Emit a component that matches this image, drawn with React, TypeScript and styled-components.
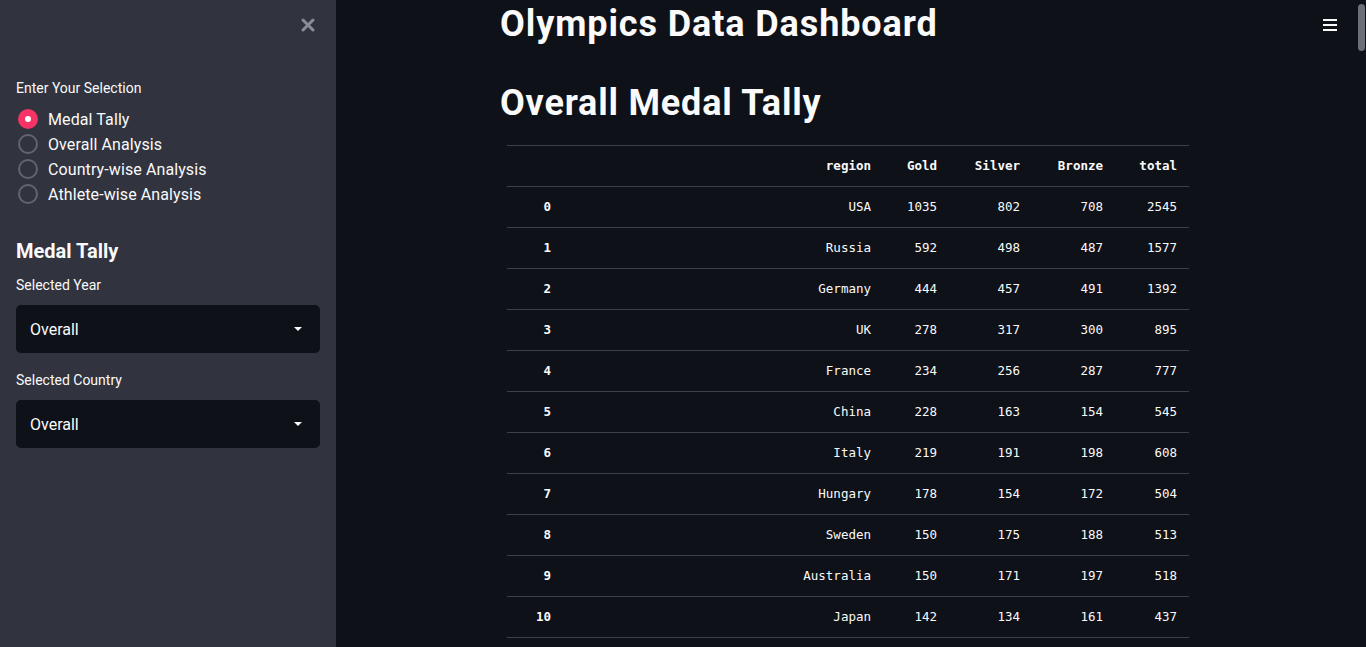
import React from "react";
import styled, { createGlobalStyle } from "styled-components";

const Global = createGlobalStyle`
  html, body { margin: 0; padding: 0; background: #0e1117; }
  body { font-family: Roboto, "Noto Sans", sans-serif; color: #fafafa; overflow: hidden; }
  * { box-sizing: border-box; }
`;

const Page = styled.div`
  display: flex;
  width: 1366px;
  height: 647px;
  background: #0e1117;
  position: relative;
  overflow: hidden;
`;

const Sidebar = styled.aside`
  width: 336px;
  flex: none;
  background: #31333f;
  padding: 0 16px;
  display: flex;
  flex-direction: column;
  position: relative;
`;

const CloseButton = styled.div`
  position: absolute;
  top: 17px;
  left: 300px;
  width: 16px;
  height: 16px;
`;

const Label = styled.div<{ $top: number }>`
  font-size: 14px;
  line-height: 20px;
  margin-top: ${(p) => p.$top}px;
  color: #fafafa;
`;

const RadioGroup = styled.div`
  display: flex;
  flex-direction: column;
  margin-top: 8.5px;
`;

const RadioItem = styled.div`
  display: flex;
  align-items: center;
  height: 25px;
  gap: 10px;
  font-size: 16px;
  letter-spacing: 0.1px;
  color: #fafafa;
`;

const RadioCircle = styled.span<{ $on?: boolean }>`
  width: 20px;
  height: 20px;
  margin-left: 2px;
  border-radius: 50%;
  flex: none;
  display: flex;
  align-items: center;
  justify-content: center;
  background: ${(p) => (p.$on ? "#f63366" : "transparent")};
  border: ${(p) => (p.$on ? "none" : "2px solid #62646f")};
  &::after {
    content: "";
    display: ${(p) => (p.$on ? "block" : "none")};
    width: 6px;
    height: 6px;
    border-radius: 50%;
    background: #fff;
  }
`;

const SideHeading = styled.h2`
  margin: 29.5px 0 0;
  font-size: 20px;
  line-height: 30px;
  font-weight: 700;
`;

const Select = styled.div`
  margin-top: 10px;
  height: 48px;
  background: #0e1117;
  border-radius: 5px;
  display: flex;
  align-items: center;
  justify-content: space-between;
  padding: 0 17px 0 14px;
  font-size: 16px;
`;

const Main = styled.main`
  flex: 1;
  padding-left: 164px;
  display: flex;
  flex-direction: column;
`;

const Title = styled.h1`
  margin: 0;
  font-size: 36px;
  line-height: 48px;
  font-weight: 700;
  letter-spacing: 0.9px;
`;

const Heading = styled.h2`
  margin: 31px 0 0;
  font-size: 36px;
  line-height: 48px;
  font-weight: 700;
  letter-spacing: 0.8px;
`;

const Table = styled.table`
  margin: 18px 0 0 7px;
  width: 682px;
  border-collapse: collapse;
  font-family: "DejaVu Sans Mono", "Liberation Mono", monospace;
  font-size: 12.5px;
  color: #fafafa;
  border-top: 1px solid #3d3f47;
`;

const Th = styled.th<{ $w?: number }>`
  height: 41px;
  padding: 0 12px 2px 0;
  text-align: right;
  font-weight: 700;
  border-bottom: 1px solid #3d3f47;
  width: ${(p) => (p.$w ? `${p.$w}px` : "auto")};
`;

const Td = styled.td<{ $bold?: boolean }>`
  height: 41px;
  padding: 0 12px 2px 0;
  text-align: right;
  font-weight: ${(p) => (p.$bold ? 700 : 400)};
  border-bottom: 1px solid #3d3f47;
`;

const Hamburger = styled.div`
  position: absolute;
  top: 19px;
  left: 1323px;
  width: 14px;
  display: flex;
  flex-direction: column;
  gap: 3px;
  & > span {
    display: block;
    height: 2px;
    background: #fafafa;
  }
`;

const Scrollbar = styled.div`
  position: absolute;
  top: 4px;
  right: 1px;
  width: 7px;
  height: 47px;
  border-radius: 4px;
  background: #6d6f76;
`;

const Caret = () => (
  <svg width="10" height="6" viewBox="0 0 10 6">
    <path d="M1 1 L9 1 L5 5 Z" fill="#fafafa" />
  </svg>
);

const rows: [string, number, number, number, number][] = [
  ["USA", 1035, 802, 708, 2545],
  ["Russia", 592, 498, 487, 1577],
  ["Germany", 444, 457, 491, 1392],
  ["UK", 278, 317, 300, 895],
  ["France", 234, 256, 287, 777],
  ["China", 228, 163, 154, 545],
  ["Italy", 219, 191, 198, 608],
  ["Hungary", 178, 154, 172, 504],
  ["Sweden", 150, 175, 188, 513],
  ["Australia", 150, 171, 197, 518],
  ["Japan", 142, 134, 161, 437],
];

export default function App() {
  return (
    <>
      <Global />
      <Page>
        <Sidebar>
          <CloseButton>
            <svg width="16" height="16" viewBox="0 0 16 16">
              <path d="M3 3 L13 13 M13 3 L3 13" stroke="#8b8d94" strokeWidth="3" strokeLinecap="round" />
            </svg>
          </CloseButton>
          <Label $top={78}>Enter Your Selection</Label>
          <RadioGroup>
            <RadioItem><RadioCircle $on />Medal Tally</RadioItem>
            <RadioItem><RadioCircle />Overall Analysis</RadioItem>
            <RadioItem><RadioCircle />Country-wise Analysis</RadioItem>
            <RadioItem><RadioCircle />Athlete-wise Analysis</RadioItem>
          </RadioGroup>
          <SideHeading>Medal Tally</SideHeading>
          <Label $top={9}>Selected Year</Label>
          <Select>Overall<Caret /></Select>
          <Label $top={17}>Selected Country</Label>
          <Select>Overall<Caret /></Select>
        </Sidebar>
        <Main>
          <Title>Olympics Data Dashboard</Title>
          <Heading>Overall Medal Tally</Heading>
          <Table>
            <thead>
              <tr>
                <Th $w={56}></Th>
                <Th>region</Th>
                <Th $w={66}>Gold</Th>
                <Th $w={83}>Silver</Th>
                <Th $w={83}>Bronze</Th>
                <Th $w={74}>total</Th>
              </tr>
            </thead>
            <tbody>
              {rows.map((r, i) => (
                <tr key={i}>
                  <Td $bold>{i}</Td>
                  <Td>{r[0]}</Td>
                  <Td>{r[1]}</Td>
                  <Td>{r[2]}</Td>
                  <Td>{r[3]}</Td>
                  <Td>{r[4]}</Td>
                </tr>
              ))}
            </tbody>
          </Table>
        </Main>
        <Hamburger><span /><span /><span /></Hamburger>
        <Scrollbar />
      </Page>
    </>
  );
}
